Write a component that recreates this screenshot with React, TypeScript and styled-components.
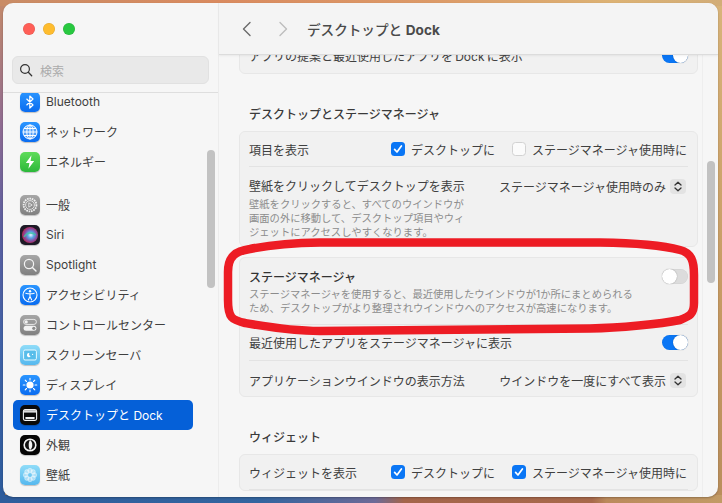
import React from 'react';
import styled, { createGlobalStyle } from 'styled-components';

const GlobalStyle = createGlobalStyle`
  html, body { margin: 0; padding: 0; }
  body { width: 722px; height: 503px; overflow: hidden; font-family: Inter, "Noto Sans CJK JP", sans-serif; }
`;

const Desktop = styled.div`
  box-sizing: border-box;
  width: 722px;
  height: 503px;
  padding: 3px 4px 6px 3px;
  background-color: #b9855c;
  background-repeat: no-repeat;
  background-image:
    linear-gradient(to right, #c98c66 0%, #d98a5f 30%, #dc9a68 60%, #dcb274 85%, #d2ad78 100%),
    linear-gradient(to right, #2f5d9c 0%, #33659f 36%, #6d6a97 52%, #a4654a 56%, #a8694b 82%, #bb8a5c 84%, #c29b66 100%),
    linear-gradient(to bottom, #c58a6a 0%, #8f6c92 25%, #5c5fa0 45%, #3f62a6 70%, #2d5c9c 100%),
    linear-gradient(to bottom, #d8b47a 0%, #c69a63 60%, #b98e5c 100%);
  background-size: 100% 6px, 100% 8px, 5px 100%, 6px 100%;
  background-position: top left, bottom left, top left, top right;
`;

const Window = styled.div`
  display: flex;
  width: 715px;
  height: 494px;
  border-radius: 10px;
  overflow: hidden;
  background: #f6f6f6;
  box-shadow: 0 1px 2px rgba(0, 0, 0, 0.25);
`;

const Sidebar = styled.aside`
  position: relative;
  flex: 0 0 216px;
  display: flex;
  flex-direction: column;
  border-right: 1px solid #ececec;
  box-sizing: border-box;
`;

const SidebarTop = styled.div`
  flex: 0 0 90px;
  box-sizing: border-box;
  padding: 20px 9px 0;
  border-bottom: 1px solid #dedede;
`;

const Lights = styled.div`
  display: flex;
  gap: 8px;
  padding-left: 11px;
  margin-bottom: 21px;
`;

const Light = styled.span<{ $color: string }>`
  width: 12px;
  height: 12px;
  border-radius: 50%;
  background: ${(p) => p.$color};
  box-shadow: inset 0 0 0 0.5px rgba(0, 0, 0, 0.12);
`;

const Search = styled.div`
  display: flex;
  align-items: center;
  gap: 7px;
  box-sizing: border-box;
  width: 197px;
  height: 28px;
  padding-left: 6px;
  border-radius: 6px;
  background: #e9e9e9;
  border: 1px solid #e1e1e1;
  color: #ababab;
  font-size: 12px;
`;

const SideList = styled.div`
  flex: 1;
  overflow: hidden;
`;

const SideScroll = styled.div`
  margin-top: -6px;
  padding: 0 10px;
`;

const SideGap = styled.div`
  height: 13px;
`;

const SideRow = styled.div<{ $active?: boolean }>`
  display: flex;
  align-items: center;
  gap: 6px;
  box-sizing: border-box;
  width: 180px;
  height: 30px;
  padding-left: 7px;
  border-radius: 5px;
  font-size: 12px;
  color: ${(p) => (p.$active ? '#ffffff' : '#3f3f3f')};
  background: ${(p) => (p.$active ? '#0560d8' : 'transparent')};
  white-space: nowrap;
`;

const SideLabel = styled.span`
  margin-bottom: 2px;
`;

const Tile = styled.span<{ $bg: string }>`
  display: flex;
  flex: 0 0 20px;
  width: 20px;
  height: 20px;
  border-radius: 5px;
  overflow: hidden;
  background: ${(p) => p.$bg};
  box-shadow: 0 1px 1px rgba(0, 0, 0, 0.22);
`;

const Thumb = styled.div<{ $top: number; $height: number; $right: number }>`
  position: absolute;
  top: ${(p) => p.$top}px;
  right: ${(p) => p.$right}px;
  width: 8px;
  height: ${(p) => p.$height}px;
  border-radius: 4px;
  background: #c2c2c2;
`;

const Main = styled.main`
  position: relative;
  flex: 1;
  display: flex;
  flex-direction: column;
  min-width: 0;
`;

const Header = styled.header`
  position: relative;
  z-index: 2;
  flex: 0 0 52px;
  display: flex;
  align-items: center;
  box-sizing: border-box;
  padding: 0 0 0 22px;
  background: #f4f4f4;
  border-bottom: 1px solid #dcdcdc;
  box-shadow: 0 1px 2px rgba(0, 0, 0, 0.06);
`;

const Nav = styled.span<{ $width: number }>`
  display: flex;
  width: ${(p) => p.$width}px;
`;

const Title = styled.h1`
  margin: 0 0 0 6px;
  font-size: 13.6px;
  font-weight: 500;
  color: #4a4a4a;

  b {
    font-weight: 700;
  }
`;

const Pane = styled.div`
  flex: 1;
  overflow: hidden;
  border-right: 1px solid #eeeeee;
  margin-right: 15px;
`;

const PaneScroll = styled.div`
  margin-top: -18px;
  padding: 0 5px 0 20px;
`;

const Card = styled.section<{ $gap?: number }>`
  margin-top: ${(p) => p.$gap ?? 0}px;
  padding: 0 9px;
  border-radius: 6px;
  background: #f1f1f1;
  border: 1px solid #e7e7e7;
  box-sizing: border-box;
  width: 459px;
`;

const Heading = styled.h2`
  margin: 32px 0 7px 10px;
  height: 18px;
  line-height: 18px;
  font-size: 12px;
  font-weight: 500;
  color: #3a3a3a;
`;

const Row = styled.div<{ $height?: number; $line?: boolean }>`
  display: flex;
  align-items: center;
  justify-content: space-between;
  height: ${(p) => p.$height ?? 35}px;
  box-sizing: border-box;
  border-bottom: ${(p) => (p.$line ? '1px solid #e3e3e3' : 'none')};
  font-size: 12px;
  color: #404040;
  white-space: nowrap;
`;

const TallRow = styled(Row)<{ $pad: number }>`
  align-items: flex-start;
  padding-top: ${(p) => p.$pad}px;
`;

const LastRow = styled(Row)`
  padding-top: 3px;
`;

const RowTitle = styled.div<{ $strong?: boolean }>`
  line-height: 17px;
  font-weight: ${(p) => (p.$strong ? 500 : 400)};
  color: ${(p) => (p.$strong ? '#333333' : '#404040')};
`;

const Desc = styled.div<{ $gap: number }>`
  margin-top: ${(p) => p.$gap}px;
  font-size: 10.3px;
  line-height: 14px;
  color: #8c8c8c;
`;

const Checks = styled.div`
  display: flex;
  align-items: center;
  margin-right: 1px;
`;

const CheckLabel = styled.span`
  display: flex;
  align-items: center;
  gap: 6px;
  margin-left: 17px;
`;

const Box = styled.span<{ $on?: boolean }>`
  display: flex;
  align-items: center;
  justify-content: center;
  box-sizing: border-box;
  width: 14px;
  height: 14px;
  border-radius: 3.5px;
  background: ${(p) => (p.$on ? '#0a76f5' : '#fbfbfb')};
  border: ${(p) => (p.$on ? 'none' : '1px solid #d2d2d2')};
`;

const Switch = styled.span<{ $on?: boolean }>`
  display: flex;
  justify-content: ${(p) => (p.$on ? 'flex-end' : 'flex-start')};
  width: 26px;
  height: 15px;
  border-radius: 8px;
  background: ${(p) => (p.$on ? '#0a76f5' : '#dcdcdc')};
  box-shadow: inset 0 0 0 0.5px rgba(0, 0, 0, 0.05);
`;

const Knob = styled.span`
  width: 15px;
  height: 15px;
  border-radius: 50%;
  background: #ffffff;
  box-shadow: 0 0 1px rgba(0, 0, 0, 0.45);
`;

const Select = styled.div`
  display: flex;
  align-items: center;
  gap: 4px;
  margin-right: 2px;
`;

const Stepper = styled.span`
  display: flex;
  align-items: center;
  justify-content: center;
  width: 16px;
  height: 15px;
  border-radius: 4px;
  background: #e3e3e3;
`;

const Marker = styled.svg`
  position: absolute;
  z-index: 3;
  top: 0;
  left: 0;
  pointer-events: none;
`;

function Check({ on, label }: { on?: boolean; label: string }) {
  return (
    <CheckLabel>
      <Box $on={on}>
        {on && (
          <svg width="10" height="10" viewBox="0 0 10 10">
            <path d="M1.6 5.4 4 8 8.4 2" fill="none" stroke="#fff" strokeWidth="1.7" strokeLinecap="round" strokeLinejoin="round" />
          </svg>
        )}
      </Box>
      {label}
    </CheckLabel>
  );
}

function Toggle({ on }: { on?: boolean }) {
  return (
    <Switch $on={on}>
      <Knob />
    </Switch>
  );
}

function Popup({ value }: { value: string }) {
  return (
    <Select>
      {value}
      <Stepper>
        <svg width="8" height="11" viewBox="0 0 8 11">
          <path d="M1 4 4 1.2 7 4M1 7l3 2.8L7 7" fill="none" stroke="#333" strokeWidth="1.3" strokeLinecap="round" strokeLinejoin="round" />
        </svg>
      </Stepper>
    </Select>
  );
}

const Glyph = ({ children }: { children: React.ReactNode }) => (
  <svg width="20" height="20" viewBox="0 0 20 20" fill="none">
    {children}
  </svg>
);

const blue = 'linear-gradient(#2a95ff, #0a6cf0)';
const grey = 'linear-gradient(#a6a6a6, #808080)';
const sky = 'linear-gradient(#8fdcf8, #55b8ee)';

const icons: Record<string, React.ReactNode> = {
  bluetooth: (
    <Tile $bg={blue}>
      <Glyph>
        <path d="M6.5 6.8 13 13l-3.2 3V4l3.2 3-6.5 6.2" stroke="#fff" strokeWidth="1.2" strokeLinejoin="round" />
      </Glyph>
    </Tile>
  ),
  network: (
    <Tile $bg={blue}>
      <Glyph>
        <g stroke="#fff" strokeWidth="1">
          <circle cx="10" cy="10" r="7" fill="rgba(255,255,255,.25)" />
          <ellipse cx="10" cy="10" rx="3.2" ry="7" />
          <path d="M10 3v14M3 10h14M4 6.5h12M4 13.5h12" />
        </g>
      </Glyph>
    </Tile>
  ),
  energy: (
    <Tile $bg="linear-gradient(#5fdc5a, #2cb83a)">
      <Glyph>
        <path d="M11.5 3.2 5.8 11h3.6l-1 5.8L14.2 9h-3.6z" fill="#fff" />
      </Glyph>
    </Tile>
  ),
  general: (
    <Tile $bg={grey}>
      <Glyph>
        <circle cx="10" cy="10" r="6.4" stroke="#f0f0f0" strokeWidth="1.8" strokeDasharray="1.6 .8" />
        <circle cx="10" cy="10" r="4.4" stroke="#f0f0f0" strokeWidth=".8" />
        <path d="M8.8 7.8 12.2 10l-3.4 2.2z" stroke="#f0f0f0" strokeWidth=".8" />
      </Glyph>
    </Tile>
  ),
  siri: (
    <Tile $bg="#1d1a26">
      <svg width="20" height="20" viewBox="0 0 20 20">
        <defs>
          <radialGradient id="siriGlow" cx="55%" cy="50%" r="55%">
            <stop offset="0" stopColor="#e8f4ff" />
            <stop offset=".35" stopColor="#58a6e8" />
            <stop offset=".7" stopColor="#8a4a9c" />
            <stop offset="1" stopColor="#b5264f" />
          </radialGradient>
        </defs>
        <circle cx="10" cy="10" r="8" fill="url(#siriGlow)" />
        <path d="M4 12c3-5 8-5 12-2" stroke="#3fc8a0" strokeWidth="1.4" fill="none" opacity=".8" />
      </svg>
    </Tile>
  ),
  spotlight: (
    <Tile $bg={grey}>
      <Glyph>
        <circle cx="9" cy="9" r="4.6" stroke="#f4f4f4" strokeWidth="1.2" />
        <path d="m12.4 12.4 3.6 3.6" stroke="#f4f4f4" strokeWidth="1.4" strokeLinecap="round" />
      </Glyph>
    </Tile>
  ),
  access: (
    <Tile $bg={blue}>
      <Glyph>
        <circle cx="10" cy="10" r="7" stroke="#fff" strokeWidth="1.1" />
        <circle cx="10" cy="6.3" r="1.2" fill="#fff" />
        <path d="M5.8 8.2c2.8.7 5.6.7 8.4 0M10 8.800v2.800M10 11.400l-1.700 3.600M10 11.400l1.700 3.600" stroke="#fff" strokeWidth="1.1" strokeLinecap="round" />
      </Glyph>
    </Tile>
  ),
  control: (
    <Tile $bg={grey}>
      <Glyph>
        <rect x="3.6" y="4.4" width="12.8" height="5" rx="2.5" stroke="#f2f2f2" strokeWidth=".9" />
        <circle cx="6.2" cy="6.9" r="1.6" fill="#f2f2f2" />
        <rect x="3.6" y="10.8" width="12.8" height="5" rx="2.5" fill="#f2f2f2" />
        <circle cx="13.8" cy="13.3" r="1.6" fill="#8a8a8a" />
      </Glyph>
    </Tile>
  ),
  saver: (
    <Tile $bg={sky}>
      <Glyph>
        <rect x="3.6" y="5" width="12.8" height="10" rx="1.5" fill="#58bdea" stroke="#eafaff" strokeWidth="1" />
        <path d="M9.4 8.2a2 2 0 1 0 1.2 3 2.2 2.2 0 0 1-1.2-3z" fill="#fff" />
        <circle cx="12.6" cy="9.4" r=".6" fill="#fff" />
      </Glyph>
    </Tile>
  ),
  display: (
    <Tile $bg={blue}>
      <Glyph>
        <circle cx="10" cy="10" r="3.6" fill="#fff" />
        <path d="M10 3.200v1.800M10 15v1.800M3.200 10H5M15 10h1.800M5.200 5.200l1.300 1.300M13.500 13.500l1.300 1.300M5.200 14.800l1.300-1.300M13.500 6.500l1.300-1.300" stroke="#fff" strokeWidth="1.1" strokeLinecap="round" />
      </Glyph>
    </Tile>
  ),
  dock: (
    <Tile $bg="#0a0a0a">
      <Glyph>
        <rect x="3.4" y="4.6" width="13.2" height="10.8" rx="1.6" stroke="#f2f2f2" strokeWidth="1.1" />
        <rect x="4" y="5.2" width="12" height="2.4" fill="#dcdcdc" />
        <rect x="5.4" y="12" width="9.2" height="2" rx=".4" fill="#f2f2f2" />
      </Glyph>
    </Tile>
  ),
  appearance: (
    <Tile $bg="#050505">
      <Glyph>
        <circle cx="10" cy="10" r="6.6" fill="#f4f4f4" />
        <path d="M10 5a5 5 0 0 1 0 10c1.700-1.300 2.300-3.100 2.300-5S11.700 6.300 10 5z" fill="#111" />
        <path d="M10 5a5 5 0 0 0 0 10c-.9-1.300-1.300-3.100-1.300-5S9.100 6.300 10 5z" fill="#111" />
      </Glyph>
    </Tile>
  ),
  wallpaper: (
    <Tile $bg={sky}>
      <Glyph>
        <g fill="rgba(255,255,255,.42)" stroke="rgba(255,255,255,.75)" strokeWidth=".5">
          <circle cx="10" cy="5.600" r="2.300" />
          <circle cx="10" cy="14.400" r="2.300" />
          <circle cx="5.600" cy="10" r="2.300" />
          <circle cx="14.400" cy="10" r="2.300" />
          <circle cx="6.900" cy="6.900" r="2.300" />
          <circle cx="13.100" cy="6.900" r="2.300" />
          <circle cx="6.900" cy="13.100" r="2.300" />
          <circle cx="13.100" cy="13.100" r="2.300" />
        </g>
      </Glyph>
    </Tile>
  ),
};

const sideItems: ({ icon: string; label: string; active?: boolean } | null)[] = [
  { icon: 'bluetooth', label: 'Bluetooth' },
  { icon: 'network', label: 'ネットワーク' },
  { icon: 'energy', label: 'エネルギー' },
  null,
  { icon: 'general', label: '一般' },
  { icon: 'siri', label: 'Siri' },
  { icon: 'spotlight', label: 'Spotlight' },
  { icon: 'access', label: 'アクセシビリティ' },
  { icon: 'control', label: 'コントロールセンター' },
  { icon: 'saver', label: 'スクリーンセーバ' },
  { icon: 'display', label: 'ディスプレイ' },
  { icon: 'dock', label: 'デスクトップと Dock', active: true },
  { icon: 'appearance', label: '外観' },
  { icon: 'wallpaper', label: '壁紙' },
];

export default function App() {
  return (
    <Desktop>
      <GlobalStyle />
      <Window>
        <Sidebar>
          <SidebarTop>
            <Lights>
              <Light $color="#ff5f57" />
              <Light $color="#febc2e" />
              <Light $color="#28c840" />
            </Lights>
            <Search>
              <svg width="14" height="14" viewBox="0 0 14 14" fill="none">
                <circle cx="6" cy="6" r="4.4" stroke="#333" strokeWidth="1.2" />
                <path d="m9.300 9.300 3.400 3.400" stroke="#333" strokeWidth="1.3" strokeLinecap="round" />
              </svg>
              検索
            </Search>
          </SidebarTop>
          <SideList>
            <SideScroll>
              {sideItems.map((item, i) =>
                item ? (
                  <SideRow key={item.label} $active={item.active}>
                    {icons[item.icon]}
                    <SideLabel>{item.label}</SideLabel>
                  </SideRow>
                ) : (
                  <SideGap key={i} />
                ),
              )}
            </SideScroll>
          </SideList>
          <Thumb $top={147} $height={138} $right={3} />
        </Sidebar>
        <Main>
          <Header>
            <Nav $width={36}>
              <svg width="12" height="16" viewBox="0 0 12 16" fill="none">
                <path d="M9 1.500 2.500 8 9 14.500" stroke="#6a6a6a" strokeWidth="1.4" strokeLinecap="round" strokeLinejoin="round" />
              </svg>
            </Nav>
            <Nav $width={24}>
              <svg width="12" height="16" viewBox="0 0 12 16" fill="none">
                <path d="M3 1.500 9.500 8 3 14.500" stroke="#bdbdbd" strokeWidth="1.4" strokeLinecap="round" strokeLinejoin="round" />
              </svg>
            </Nav>
            <Title>
              デスクトップと <b>Dock</b>
            </Title>
          </Header>
          <Pane>
            <PaneScroll>
              <Card>
                <Row>
                  アプリの提案と最近使用したアプリを{'\u2009'}Dock{'\u2009'}に表示
                  <Toggle on />
                </Row>
              </Card>
              <Heading>デスクトップとステージマネージャ</Heading>
              <Card>
                <Row $line>
                  項目を表示
                  <Checks>
                    <Check on label="デスクトップに" />
                    <Check label="ステージマネージャ使用時に" />
                  </Checks>
                </Row>
                <TallRow $height={79} $pad={11}>
                  <div>
                    <RowTitle>壁紙をクリックしてデスクトップを表示</RowTitle>
                    <Desc $gap={2}>
                      壁紙をクリックすると、すべてのウインドウが
                      <br />
                      画面の外に移動して、デスクトップ項目やウィ
                      <br />
                      ジェットにアクセスしやすくなります。
                    </Desc>
                  </div>
                  <Popup value="ステージマネージャ使用時のみ" />
                </TallRow>
              </Card>
              <Card $gap={10}>
                <TallRow $height={67} $line $pad={11}>
                  <div>
                    <RowTitle $strong>ステージマネージャ</RowTitle>
                    <Desc $gap={1}>
                      ステージマネージャを使用すると、最近使用したウインドウが1か所にまとめられる
                      <br />
                      ため、デスクトップがより整理されウインドウへのアクセスが高速になります。
                    </Desc>
                  </div>
                  <Toggle />
                </TallRow>
                <Row $height={36} $line>
                  最近使用したアプリをステージマネージャに表示
                  <Toggle on />
                </Row>
                <LastRow>
                  アプリケーションウインドウの表示方法
                  <Popup value="ウインドウを一度にすべて表示" />
                </LastRow>
              </Card>
              <Heading>ウィジェット</Heading>
              <Card $gap={1}>
                <Row $line>
                  ウィジェットを表示
                  <Checks>
                    <Check on label="デスクトップに" />
                    <Check on label="ステージマネージャ使用時に" />
                  </Checks>
                </Row>
              </Card>
            </PaneScroll>
          </Pane>
          <Thumb $top={158} $height={122} $right={3} />
        </Main>
      </Window>
      <Marker width="722" height="503" viewBox="0 0 722 503" fill="none">
        <path
          d="M228 272C228 256 236 251 250 249C270 245 290 243 320 242.500L600 242.500C640 243 665 246 680 250C692 253 694 262 694 275L694 303C694 314 690 316 680 320C660 324 620 328 590 328.500L320 331C290 331 262 326 245 323C232 320 228 318 228 300Z"
          stroke="#ed1c24"
          strokeWidth="8.5"
        />
      </Marker>
    </Desktop>
  );
}
